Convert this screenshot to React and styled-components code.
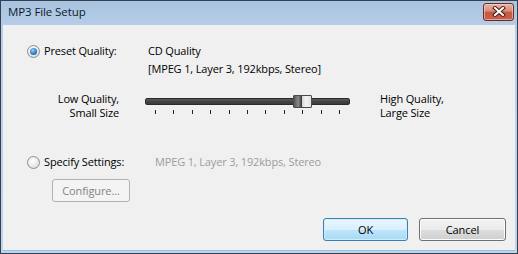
import React from "react";
import styled, { createGlobalStyle } from "styled-components";

const Global = createGlobalStyle`
  html, body { margin: 0; padding: 0; background: #fff; }
  body { font-family: "Open Sans", "Noto Sans", sans-serif; }
  * { box-sizing: border-box; }
`;

const Frame = styled.div`
  width: 518px;
  height: 254px;
  display: flex;
  flex-direction: column;
  border: 1px solid #33414f;
  background: linear-gradient(180deg, #a9c3e0 0%, #b8cfe8 12%, #c0d5ec 100%);
  padding: 0 2px 2px 2px;
`;

const TitleBar = styled.div`
  height: 24px;
  display: flex;
  align-items: center;
  justify-content: space-between;
  padding: 0 1px 0 5px;
`;

const Title = styled.span`
  font-size: 11.5px;
  letter-spacing: -0.1px;
  color: #0e1a2b;
  margin-top: -3px;
`;

const CloseBtn = styled.div`
  width: 31px;
  height: 18px;
  margin-top: -3px;
  border: 1px solid #6b2b22;
  border-radius: 3px;
  background: linear-gradient(180deg, #e8b3a6 0%, #d88b78 45%, #c45a40 50%, #c8604a 100%);
  box-shadow: inset 0 0 0 1px rgba(255, 220, 210, 0.55);
  display: flex;
  align-items: center;
  justify-content: center;
`;

const Client = styled.div`
  flex: 1;
  background: #f0f0f0;
  display: flex;
  flex-direction: column;
  padding: 17px 9px 9px 24px;
  font-size: 11px;
  letter-spacing: -0.15px;
  color: #000;
  border-bottom: 1px solid #8fc4e8;
`;

const PresetBlock = styled.div`
  display: grid;
  grid-template-columns: 121px auto;
  line-height: 18px;
`;

const RadioLabel = styled.label`
  display: flex;
  align-items: center;
  gap: 4px;
  white-space: nowrap;
`;

const RadioCircle = styled.span`
  width: 13px;
  height: 13px;
  border-radius: 50%;
  border: 1px solid #8b8d90;
  background: radial-gradient(circle at 40% 35%, #ffffff 0%, #e9e9e9 55%, #d3d3d3 100%);
  display: flex;
  align-items: center;
  justify-content: center;
  flex: none;
`;

const RadioDot = styled.span`
  width: 7px;
  height: 7px;
  border-radius: 50%;
  background: radial-gradient(circle at 40% 35%, #a9d4f8 0%, #3c8ad8 45%, #124c8c 100%);
`;

const Info = styled.div`
  color: ${(p) => (p.$muted ? "#9d9d9d" : "#000")};
  white-space: nowrap;
`;

const SliderRow = styled.div`
  display: flex;
  align-items: flex-start;
  margin-top: 14px;
  line-height: 14px;
`;

const SideLabel = styled.div`
  width: ${(p) => p.$w}px;
  text-align: ${(p) => p.$align};
  white-space: nowrap;
  flex: none;
`;

const Slider = styled.div`
  position: relative;
  width: 205px;
  height: 21px;
  margin: 2px 30px 0 26px;
  flex: none;
`;

const Track = styled.div`
  margin-top: 4px;
  height: 7px;
  border-radius: 2px;
  border: 1px solid #2b2b2b;
  background: linear-gradient(180deg, #5a5a5a 0%, #444 50%, #3a3a3a 100%);
`;

const Thumb = styled.div`
  position: absolute;
  top: 1px;
  width: 19px;
  height: 13px;
  border: 1px solid #4a4a4a;
  border-radius: 1px;
  background: linear-gradient(90deg, #555 0%, #8a8a8a 25%, #3c3c3c 45%, #d8d8d8 50%, #f4f4f4 70%, #e0e0e0 100%);
`;

const Ticks = styled.div`
  display: flex;
  justify-content: space-between;
  padding: 0 10px;
  margin-top: 5px;
`;

const Tick = styled.span`
  width: 1px;
  height: 4px;
  background: #222;
`;

const SpecifyRow = styled.div`
  display: grid;
  grid-template-columns: 128px auto;
  line-height: 18px;
  margin-top: 33px;
`;

const Button = styled.button`
  font-family: inherit;
  font-size: 11px;
  letter-spacing: -0.1px;
  height: 23px;
  width: ${(p) => p.$w}px;
  border-radius: 3px;
  padding: 0;
  cursor: default;
`;

const DisabledButton = styled(Button)`
  margin-top: 8px;
  margin-left: 25px;
  border: 1px solid #adb2b5;
  background: #f4f4f4;
  color: #838383;
`;

const Footer = styled.div`
  margin-top: auto;
  display: flex;
  justify-content: flex-end;
  gap: 11px;
`;

const DialogButton = styled(Button)`
  color: #000;
  border: 1px solid ${(p) => (p.$default ? "#3c7fb1" : "#707070")};
  background: ${(p) =>
    p.$default
      ? "linear-gradient(180deg, #eaf6fd 0%, #d9f0fc 50%, #bee6fd 51%, #a7d9f5 100%)"
      : "linear-gradient(180deg, #f2f2f2 0%, #ebebeb 50%, #dddddd 51%, #cfcfcf 100%)"};
  box-shadow: inset 0 0 0 1px ${(p) => (p.$default ? "#cfeefc" : "#fcfcfc")};
`;

function Radio({ checked, children }) {
  return (
    <RadioLabel>
      <RadioCircle>{checked && <RadioDot />}</RadioCircle>
      {children}
    </RadioLabel>
  );
}

export default function App() {
  const ticks = Array.from({ length: 11 });
  return (
    <>
      <Global />
      <Frame>
        <TitleBar>
          <Title>MP3 File Setup</Title>
          <CloseBtn>
            <svg width="14" height="11" viewBox="0 0 14 11">
              <path d="M3 2 L11 9 M11 2 L3 9" stroke="#4a1e16" strokeWidth="4" strokeLinecap="square" />
              <path d="M3 2 L11 9 M11 2 L3 9" stroke="#fff" strokeWidth="2" strokeLinecap="square" />
            </svg>
          </CloseBtn>
        </TitleBar>
        <Client>
          <PresetBlock>
            <Radio checked>Preset Quality:</Radio>
            <Info>CD Quality</Info>
            <span />
            <Info>[MPEG 1, Layer 3, 192kbps, Stereo]</Info>
          </PresetBlock>
          <SliderRow>
            <SideLabel $w={92} $align="right">
              Low Quality,
              <br />
              Small Size
            </SideLabel>
            <Slider>
              <Track />
              <Thumb style={{ left: 148 }} />
              <Ticks>
                {ticks.map((_, i) => (
                  <Tick key={i} />
                ))}
              </Ticks>
            </Slider>
            <SideLabel $w={90} $align="left">
              High Quality,
              <br />
              Large Size
            </SideLabel>
          </SliderRow>
          <SpecifyRow>
            <Radio>Specify Settings:</Radio>
            <Info $muted>MPEG 1, Layer 3, 192kbps, Stereo</Info>
          </SpecifyRow>
          <div>
            <DisabledButton $w={78} disabled>
              Configure...
            </DisabledButton>
          </div>
          <Footer>
            <DialogButton $w={85} $default>
              OK
            </DialogButton>
            <DialogButton $w={87}>Cancel</DialogButton>
          </Footer>
        </Client>
      </Frame>
    </>
  );
}
